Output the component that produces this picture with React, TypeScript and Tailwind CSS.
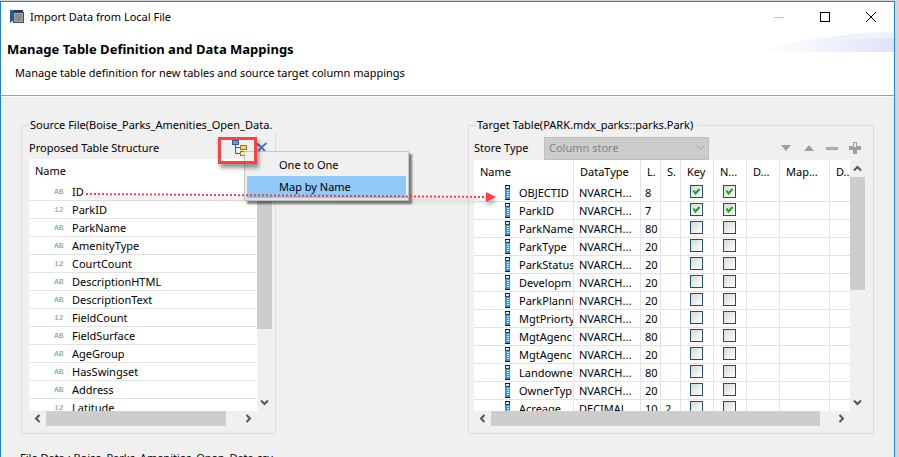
import type { ReactNode } from "react";

type SourceColumn = { name: string; kind: "AB" | "12" };
type TargetColumn = {
  name: string;
  type: string;
  length: string;
  scale?: string;
  key?: boolean;
  notNull?: boolean;
};

const sourceColumns: SourceColumn[] = [
  { name: "ID", kind: "AB" },
  { name: "ParkID", kind: "12" },
  { name: "ParkName", kind: "AB" },
  { name: "AmenityType", kind: "AB" },
  { name: "CourtCount", kind: "12" },
  { name: "DescriptionHTML", kind: "AB" },
  { name: "DescriptionText", kind: "AB" },
  { name: "FieldCount", kind: "12" },
  { name: "FieldSurface", kind: "AB" },
  { name: "AgeGroup", kind: "AB" },
  { name: "HasSwingset", kind: "AB" },
  { name: "Address", kind: "AB" },
  { name: "Latitude", kind: "12" },
];

const targetColumns: TargetColumn[] = [
  { name: "OBJECTID", type: "NVARCH...", length: "8", key: true, notNull: true },
  { name: "ParkID", type: "NVARCH...", length: "7", key: true, notNull: true },
  { name: "ParkName", type: "NVARCH...", length: "80" },
  { name: "ParkType", type: "NVARCH...", length: "20" },
  { name: "ParkStatus", type: "NVARCH...", length: "20" },
  { name: "Developm", type: "NVARCH...", length: "20" },
  { name: "ParkPlanni", type: "NVARCH...", length: "20" },
  { name: "MgtPriorty", type: "NVARCH...", length: "20" },
  { name: "MgtAgenc", type: "NVARCH...", length: "80" },
  { name: "MgtAgenc", type: "NVARCH...", length: "20" },
  { name: "Landowne", type: "NVARCH...", length: "80" },
  { name: "OwnerTyp", type: "NVARCH...", length: "20" },
  { name: "Acreage", type: "DECIMAL", length: "10", scale: "2" },
];

const headings = ["Name", "DataType", "L.", "S.", "Key", "N...", "D...", "Map...", "D..."];

function AppIcon() {
  return (
    <svg width="14" height="14" viewBox="0 0 14 14" aria-hidden="true">
      <path d="M0 0h13v3H4v7L0 13z" fill="#1f5f9f" />
      <path d="M4 0h9v3H4z" fill="#17406e" />
      <rect x="3" y="2" width="11" height="11" fill="#4a4a4a" />
      <rect x="4.500" y="3.500" width="8" height="8" fill="#8c8c8c" stroke="#a8a8a8" />
    </svg>
  );
}

function Chevron({ d }: { d: string }) {
  return (
    <svg width="9" height="9" viewBox="0 0 9 9" fill="none" aria-hidden="true">
      <path d={d} stroke="#555555" strokeWidth="2" />
    </svg>
  );
}

const UP = "M1 6.500L4.500 3L8 6.500";
const DOWN = "M1 2.500L4.500 6L8 2.500";
const LEFT = "M6.500 1L3 4.500L6.500 8";
const RIGHT = "M2.500 1L6 4.500L2.500 8";

function VerticalScrollbar({ thumb }: { thumb: string }) {
  return (
    <div className="flex w-4 shrink-0 flex-col items-center bg-[#f0f0f0] pr-px">
      <button type="button" aria-label="Scroll up" className="flex h-[17px] w-full items-center justify-center">
        <Chevron d={UP} />
      </button>
      <div className={`w-full bg-[#cdcdcd] ${thumb}`} />
      <button type="button" aria-label="Scroll down" className="mt-auto flex h-[17px] w-full items-center justify-center">
        <Chevron d={DOWN} />
      </button>
    </div>
  );
}

function HorizontalScrollbar({ rest }: { rest: string }) {
  return (
    <div className="mr-4 flex h-[15px] items-center bg-[#f0f0f0]">
      <button type="button" aria-label="Scroll left" className="flex h-full w-[17px] items-center justify-center">
        <Chevron d={LEFT} />
      </button>
      <div className="h-full flex-1 bg-[#cdcdcd]" />
      <button type="button" aria-label="Scroll right" className={`flex h-full items-center justify-end pr-1 ${rest}`}>
        <Chevron d={RIGHT} />
      </button>
    </div>
  );
}

function Panel({ title, children }: { title: string; children: ReactNode }) {
  return (
    <fieldset className="h-[317px] min-w-0 border border-[#dcdcdc] pl-[7px] pr-[2px]">
      <legend className="h-4 whitespace-nowrap pl-px pr-1">{title}</legend>
      {children}
    </fieldset>
  );
}

function Tick({ label, checked }: { label: string; checked?: boolean }) {
  return (
    <input
      type="checkbox"
      aria-label={label}
      defaultChecked={checked}
      className="peer col-start-1 row-start-1 block size-[13px] appearance-none border border-[#1c4f80] bg-linear-to-br from-[#d9d9d2] to-white"
    />
  );
}

function TickCell({ label, checked }: { label: string; checked?: boolean }) {
  return (
    <td className="border-b border-r border-[#e3e3e3] p-0">
      <div className="mb-[2px] ml-[9px] grid w-[13px]">
        <Tick label={label} checked={checked} />
        <svg
          className="pointer-events-none col-start-1 row-start-1 hidden peer-checked:block"
          width="13"
          height="13"
          viewBox="0 0 13 13"
          fill="none"
          aria-hidden="true"
        >
          <path d="M3.500 5.500L5.500 8.500L9.500 4" stroke="#21a121" strokeWidth="2" />
        </svg>
      </div>
    </td>
  );
}

function ColumnIcon() {
  return (
    <svg className="shrink-0" width="5" height="15" viewBox="0 0 5 15" aria-hidden="true">
      <rect width="5" height="15" fill="#164a73" />
      <rect width="5" height="1" fill="#111111" />
      <rect y="14" width="5" height="1" fill="#111111" />
      <rect x="1" y="1" width="3" height="2" fill="#d8eefb" />
      <rect x="0" y="4" width="5" height="10" fill="#1f9bf0" />
      <path d="M2 5.500h2M2 7.500h2M2 9.500h2M2 11.500h2" stroke="#d5f0ff" />
    </svg>
  );
}

function HierarchyIcon() {
  return (
    <svg width="16" height="16" viewBox="0 0 16 16" aria-hidden="true">
      <path d="M3.500 4v9.500H8M3.500 7.500H8" fill="none" stroke="#40597c" />
      <rect x="0.500" y="0.500" width="6" height="4" fill="#6f9db8" stroke="#365c86" />
      <rect x="8.500" y="5.500" width="6" height="4" fill="#f5dc3c" stroke="#8c7a26" />
      <rect x="8.500" y="11.500" width="6" height="4" fill="#fbf08a" stroke="#8c7a26" />
    </svg>
  );
}

function SourcePanel() {
  return (
    <Panel title="Source File(Boise_Parks_Amenities_Open_Data.">
      <div className="flex h-[26px] items-center pt-1">
        <span>Proposed Table Structure</span>
        <div className="relative ml-auto flex items-center gap-2 pr-[5px]">
          <button type="button" aria-label="Mapping options" aria-haspopup="menu">
            <HierarchyIcon />
          </button>
          <button type="button" aria-label="Remove mapping">
            <svg width="12" height="12" viewBox="0 0 12 12" fill="none" aria-hidden="true">
              <path d="M1 1.500Q6 5 10.500 11M10.500 1Q5 5 1.500 10.500" stroke="#3b75bb" strokeWidth="2" />
            </svg>
          </button>
          <div className="absolute -left-[14px] -top-[3px] z-20 h-[27px] w-[39px] border-3 border-[#fb4144] shadow-[2px_4px_4px_rgba(0,0,0,0.4)]" />
          <div
            role="menu"
            className="absolute left-3 top-[11px] z-10 w-[165px] border border-[#c6c6c6] bg-[#f0f0f0] p-[2px] shadow-[3px_3px_2px_rgba(0,0,0,0.5)]"
          >
            <button type="button" role="menuitem" className="block h-[22px] w-full pl-8 text-left">
              One to One
            </button>
            <button type="button" role="menuitem" className="block h-[22px] w-full bg-[#91c9f7] pl-8 text-left">
              Map by Name
            </button>
          </div>
        </div>
      </div>
      <div className="flex h-[252px]">
        <div className="min-w-0 flex-1 overflow-hidden bg-white pr-px">
          <div className="h-6 pl-[6px] leading-6">Name</div>
          <ul>
            {sourceColumns.map((column) => (
              <li key={column.name} className="flex h-[18px] items-center border-b border-[#e3e3e3]">
                <span className="w-[43px] pl-[25px] pt-px font-['Liberation_Mono',monospace] text-[8px] text-[#6f9aae]">
                  {column.kind}
                </span>
                <span>{column.name}</span>
              </li>
            ))}
          </ul>
        </div>
        <VerticalScrollbar thumb="h-[153px]" />
      </div>
      <HorizontalScrollbar rest="w-[31px]" />
    </Panel>
  );
}

function TargetToolbar() {
  return (
    <div className="ml-auto flex items-center">
      <button type="button" aria-label="Move down" className="flex w-[23px] justify-center">
        <svg width="10" height="6" viewBox="0 0 10 6" aria-hidden="true">
          <path d="M0 0h10L5 6z" fill="#9f9f9f" />
        </svg>
      </button>
      <button type="button" aria-label="Move up" className="flex w-[23px] justify-center">
        <svg width="10" height="6" viewBox="0 0 10 6" aria-hidden="true">
          <path d="M0 6h10L5 0z" fill="#9f9f9f" />
        </svg>
      </button>
      <button type="button" aria-label="Remove column" className="flex w-[23px] justify-center">
        <svg width="12" height="3" viewBox="0 0 12 3" aria-hidden="true">
          <rect width="12" height="3" fill="#a0a0a0" />
          <rect x="1" y="1" width="10" height="1" fill="#c0c0c0" />
        </svg>
      </button>
      <button type="button" aria-label="Add column" className="flex w-[23px] justify-center">
        <svg width="12" height="12" viewBox="0 0 12 12" aria-hidden="true">
          <path d="M4 0h4v4h4v4H8v4H4V8H0V4h4z" fill="#9f9f9f" />
          <rect x="5" y="1" width="2" height="4" fill="#ececec" />
        </svg>
      </button>
    </div>
  );
}

function TargetPanel() {
  return (
    <Panel title="Target Table(PARK.mdx_parks::parks.Park)">
      <div className="-ml-[2px] mr-[5px]">
        <div className="flex h-[27px] items-center pt-[3px]">
          <label htmlFor="store-type" className="w-[70px]">
            Store Type
          </label>
          <div className="grid w-[165px] items-center">
            <select
              id="store-type"
              disabled
              className="col-start-1 row-start-1 h-[23px] w-full appearance-none border border-[#bfbfbf] bg-[#cccccc] pl-1 text-[#838383] opacity-100"
            >
              <option>Column store</option>
            </select>
            <svg
              className="pointer-events-none col-start-1 row-start-1 mr-1 justify-self-end"
              width="9"
              height="6"
              viewBox="0 0 9 6"
              fill="none"
              aria-hidden="true"
            >
              <path d="M0.500 0.500L4.500 4.500L8.500 0.500" stroke="#a3a3a3" />
            </svg>
          </div>
          <TargetToolbar />
        </div>
        <div className="flex h-[251px]">
          <div className="min-w-0 flex-1 overflow-hidden bg-white">
            <table className="w-full table-fixed border-separate border-spacing-0">
              <colgroup>
                <col className="w-[100px]" />
                <col className="w-[67px]" />
                <col className="w-5" />
                <col className="w-5" />
                <col className="w-[33px]" />
                <col className="w-[33px]" />
                <col className="w-[33px]" />
                <col className="w-[50px]" />
                <col />
              </colgroup>
              <thead>
                <tr className="h-6">
                  {headings.map((heading, index) => (
                    <th
                      key={index}
                      scope="col"
                      className="overflow-hidden whitespace-nowrap border-r border-[#e3e3e3] p-0 pl-[6px] text-left font-normal last:border-r-0"
                    >
                      {heading}
                    </th>
                  ))}
                </tr>
              </thead>
              <tbody>
                {targetColumns.map((column, index) => (
                  <tr key={index} className="h-[18px]">
                    <td className="overflow-hidden border-b border-r border-[#e3e3e3] p-0">
                      <div className="flex h-[17px] items-center gap-[9px] pl-[31px]">
                        <ColumnIcon />
                        <span>{column.name}</span>
                      </div>
                    </td>
                    <td className="overflow-hidden border-b border-r border-[#e3e3e3] p-0 pl-[5px]">{column.type}</td>
                    <td className="border-b border-r border-[#e3e3e3] p-0 pl-1">{column.length}</td>
                    <td className="border-b border-r border-[#e3e3e3] p-0 pl-1">{column.scale}</td>
                    <TickCell label={`${column.name} key`} checked={column.key} />
                    <TickCell label={`${column.name} not null`} checked={column.notNull} />
                    <td className="border-b border-r border-[#e3e3e3] p-0" />
                    <td className="border-b border-r border-[#e3e3e3] p-0" />
                    <td className="border-b border-[#e3e3e3] p-0" />
                  </tr>
                ))}
              </tbody>
            </table>
          </div>
          <VerticalScrollbar thumb="h-[113px]" />
        </div>
        <HorizontalScrollbar rest="w-[30px]" />
      </div>
    </Panel>
  );
}

function TitleBar() {
  return (
    <div className="flex h-[30px] items-center pl-[9px] pr-[18px]">
      <AppIcon />
      <span className="ml-[6px]">Import Data from Local File</span>
      <div className="ml-auto flex items-center gap-9">
        <button type="button" aria-label="Minimize" disabled>
          <svg width="10" height="10" viewBox="0 0 10 10" aria-hidden="true">
            <path d="M0 5.500h10" stroke="#c8c8c8" />
          </svg>
        </button>
        <button type="button" aria-label="Maximize">
          <svg width="10" height="10" viewBox="0 0 10 10" fill="none" aria-hidden="true">
            <rect x="0.500" y="0.500" width="9" height="9" stroke="#000000" />
          </svg>
        </button>
        <button type="button" aria-label="Close">
          <svg width="10" height="10" viewBox="0 0 10 10" fill="none" aria-hidden="true">
            <path d="M0 0l10 10M10 0L0 10" stroke="#000000" />
          </svg>
        </button>
      </div>
    </div>
  );
}

function Banner() {
  return (
    <header className="relative h-16 border-b border-[#a0a0a0]">
      <svg className="absolute right-0 top-0" width="138" height="20" viewBox="0 0 138 20" aria-hidden="true">
        <defs>
          <linearGradient id="swoosh">
            <stop offset="0" stopColor="#ffffff" />
            <stop offset="0.350" stopColor="#f6f8fd" />
            <stop offset="1" stopColor="#dde4f8" />
          </linearGradient>
        </defs>
        <path d="M0 20Q60 2 138 0V20z" fill="url(#swoosh)" />
        <path d="M76 9Q100 1 138 0V6Q100 6 76 9z" fill="#f3f6fd" opacity="0.700" />
      </svg>
      <h1 className="pl-[6px] pt-[9px] text-[13px] font-bold leading-4">Manage Table Definition and Data Mappings</h1>
      <p className="mt-2 pl-[14px]">Manage table definition for new tables and source target column mappings</p>
    </header>
  );
}

function MappingArrow() {
  return (
    <svg
      className="pointer-events-none absolute left-[84px] top-[90px] z-30 drop-shadow-[1px_4px_2px_rgba(0,0,0,0.3)]"
      width="412"
      height="20"
      viewBox="0 0 412 20"
      aria-hidden="true"
    >
      <path d="M1 7L402 10" stroke="#fb4144" strokeWidth="2" strokeDasharray="2 2" fill="none" />
      <path d="M401 5L411 10L401 15z" fill="#fb4144" />
    </svg>
  );
}

export default function App() {
  return (
    <div className="h-screen overflow-hidden bg-[#d5d5d8] pr-1 pt-px font-['Noto_Sans','Open_Sans',sans-serif] text-[11px] leading-4 text-black">
      <main className="h-full border-x border-t border-[#1883d7] bg-white">
        <TitleBar />
        <Banner />
        <div className="mt-px h-full bg-[#f0f0f0]">
          <div className="relative px-5 pt-5">
            <div className="grid grid-cols-[minmax(0,255fr)_minmax(0,406fr)] gap-x-[192px]">
              <SourcePanel />
              <TargetPanel />
            </div>
            <MappingArrow />
            <p className="-ml-px mt-4 whitespace-nowrap">File Data : Boise_Parks_Amenities_Open_Data.csv</p>
          </div>
        </div>
      </main>
    </div>
  );
}
